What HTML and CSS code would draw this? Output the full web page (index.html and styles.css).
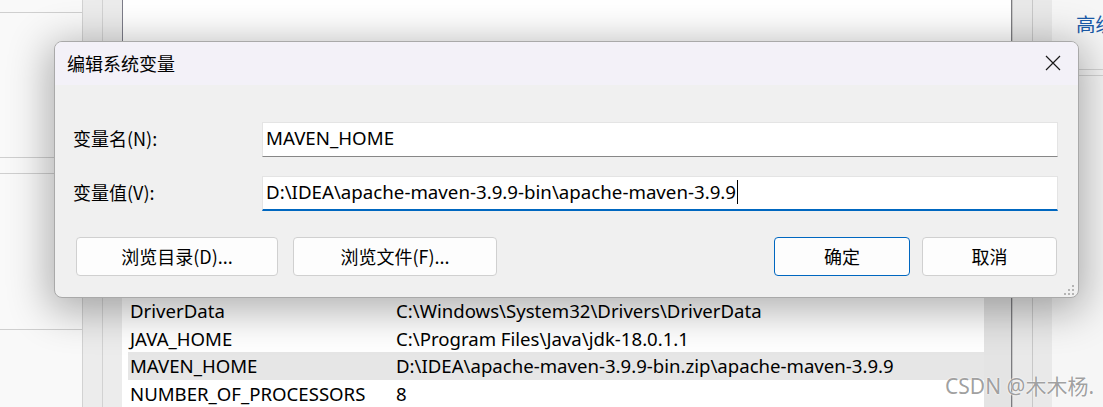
FILE: index.html
```html
<!DOCTYPE html>
<html lang="zh-CN">
<head>
<meta charset="utf-8">
<title>编辑系统变量</title>
<link rel="stylesheet" href="styles.css">
</head>
<body>
<div class="screen">
  <div class="backdrop">
    <div class="bd-left">
      <div class="bl bl-1"></div>
      <div class="bl bl-2"></div>
      <div class="bl bl-3"></div>
      <div class="bl bl-4"></div>
      <div class="bl bl-5"></div>
    </div>
    <div class="rail"></div>
    <div class="rail"></div>
    <div class="bd-main">
      <div class="user-list"></div>
      <div class="sys-list">
        <div class="rows">
          <div class="row"><span class="c1">DriverData</span><span class="c2">C:\Windows\System32\Drivers\DriverData</span></div>
          <div class="row"><span class="c1">JAVA_HOME</span><span class="c2">C:\Program Files\Java\jdk-18.0.1.1</span></div>
          <div class="row sel"><span class="c1">MAVEN_HOME</span><span class="c2">D:\IDEA\apache-maven-3.9.9-bin.zip\apache-maven-3.9.9</span></div>
          <div class="row"><span class="c1">NUMBER_OF_PROCESSORS</span><span class="c2">8</span></div>
        </div>
        <div class="vscroll"></div>
      </div>
    </div>
    <div class="rail rail-r"></div>
    <div class="rail rail-r"></div>
    <div class="bd-right">
      <div class="adv">高级</div>
      <div class="br-line"></div>
    </div>
  </div>

  <div class="dialog">
    <div class="titlebar">
      <span class="title">编辑系统变量</span>
      <svg class="close" width="16" height="16" viewBox="0 0 16 16"><path d="M1 1 L15 15 M15 1 L1 15" stroke="#1a1a1a" stroke-width="1.2" fill="none"/></svg>
    </div>
    <div class="body">
      <div class="form">
        <label class="lbl">变量名(N):</label>
        <div class="field">MAVEN_HOME</div>
        <label class="lbl">变量值(V):</label>
        <div class="field focus">D:\IDEA\apache-maven-3.9.9-bin\apache-maven-3.9.9<span class="caret"></span></div>
      </div>
      <div class="actions">
        <div class="group">
          <button class="btn w1">浏览目录(D)...</button>
          <button class="btn w2">浏览文件(F)...</button>
        </div>
        <div class="group g2">
          <button class="btn primary w3">确定</button>
          <button class="btn w4">取消</button>
        </div>
      </div>
    </div>
    <svg class="grip" width="12" height="12" viewBox="0 0 12 12">
      <rect x="9" y="1" width="2" height="2" fill="#b4b4b4"/>
      <rect x="5" y="5" width="2" height="2" fill="#b4b4b4"/>
      <rect x="9" y="5" width="2" height="2" fill="#b4b4b4"/>
      <rect x="1" y="9" width="2" height="2" fill="#b4b4b4"/>
      <rect x="5" y="9" width="2" height="2" fill="#b4b4b4"/>
      <rect x="9" y="9" width="2" height="2" fill="#b4b4b4"/>
    </svg>
  </div>

  <div class="watermark">CSDN @木木杨.</div>
</div>
</body>
</html>
```

FILE: styles.css
```css
* { box-sizing: border-box; }
html, body { margin: 0; padding: 0; }
body {
  width: 1103px;
  height: 407px;
  overflow: hidden;
  font-family: "Noto Sans", "Noto Sans CJK SC", sans-serif;
  color: #000;
  background: #f3f3f3;
}
.screen {
  position: relative;
  width: 1103px;
  height: 407px;
  overflow: hidden;
}

/* ---------- background window ---------- */
.backdrop {
  display: flex;
  height: 407px;
}
.bd-left {
  width: 82px;
  display: flex;
  flex-direction: column;
  background: #f9f9f9;
}
.bl { border-bottom: 1px solid #cfcfcf; }
.bl-1 { height: 13px; }
.bl-2 { height: 145px; }
.bl-3 { height: 16px; }
.bl-4 { height: 156px; }
.bl-5 { flex: 1; border-bottom: none; }

.rail {
  width: 20px;
  background: #ececec;
  border-left: 1px solid #d2d2d2;
}
.rail-r { background: #e9e9e9; border-left: 1px solid #c8c8c8; }

.bd-main {
  width: 890px;
  display: flex;
  flex-direction: column;
  border-right: 1px solid #7c7c80;
}
.user-list {
  height: 220px;
  background: #ffffff;
  border-left: 1px solid #7c7c88;
}
.sys-list {
  margin-top: 10px;
  flex: 1;
  display: flex;
  padding-left: 6px;
  padding-top: 71.5px;
  background: #ffffff;
}
.rows { flex: 1; }
.row {
  height: 27.5px;
  display: flex;
  align-items: center;
  padding-left: 2px;
  font-size: 18.6px;
  white-space: nowrap;
  overflow: hidden;
}
.row.sel { background: #e6e6e6; }
.c1 { width: 266px; flex: none; }
.vscroll {
  width: 27px;
  background: #e4e4e4;
}

.bd-right {
  width: 51px;
  background: #f6f6f6;
  display: flex;
  flex-direction: column;
  overflow: hidden;
}
.adv {
  padding: 12px 0 0 24px;
  height: 70px;
  font-size: 19.5px;
  line-height: 26px;
  color: #1a5aa8;
  white-space: nowrap;
  border-bottom: 1px solid #d4d4d4;
}
.br-line { height: 6px; border-bottom: 1px solid #d4d4d4; }

/* ---------- dialog ---------- */
.dialog {
  position: absolute;
  left: 54px;
  top: 41px;
  width: 1025px;
  height: 257px;
  border: 1px solid #a9a9a9;
  border-radius: 8px;
  overflow: hidden;
  background: #f0f0f0;
  box-shadow: 0 8px 40px 6px rgba(0, 0, 0, 0.30);
  display: flex;
  flex-direction: column;
}
.titlebar {
  height: 43px;
  background: #f3f1f8;
  display: flex;
  align-items: center;
  justify-content: space-between;
  padding: 0 17px 0 12px;
}
.title {
  font-family: "Noto Sans CJK SC", sans-serif;
  font-size: 18px;
  line-height: 24px;
  margin-top: -2px;
}
.close { display: block; margin-top: -2px; }

.body {
  flex: 1;
  padding: 37px 20px 0 18px;
}
.form {
  display: grid;
  grid-template-columns: 189px 796px;
  row-gap: 19px;
  align-items: center;
}
.lbl {
  font-family: "Noto Sans CJK SC", sans-serif;
  font-size: 18px;
  line-height: 24px;
  margin-top: -3px;
}
.field {
  height: 35px;
  background: #fff;
  border: 1px solid #e4e4e4;
  border-bottom: 1px solid #878787;
  font-size: 18.7px;
  line-height: 28px;
  padding: 0 0 4px 3px;
  white-space: nowrap;
  overflow: hidden;
  display: flex;
  align-items: center;
}
.field.focus { border-bottom: 2px solid #0067c0; padding-bottom: 3px; }
.caret {
  display: inline-block;
  width: 1px;
  height: 24px;
  background: #000;
  margin-left: 1px;
}

.actions {
  margin-top: 26px;
  display: flex;
  justify-content: space-between;
  padding: 0 1px 0 3px;
}
.group { display: flex; gap: 15px; }
.group.g2 { gap: 12px; }
.btn {
  height: 39px;
  background: #fdfdfd;
  border: 1px solid #d0d0d0;
  border-radius: 4px;
  font-family: "Noto Sans CJK SC", sans-serif;
  font-size: 18px;
  color: #000;
  padding: 0 0 2px 0;
}
.btn.primary { border: 1px solid #0067c0; }
.w1 { width: 202px; }
.w2 { width: 204px; }
.w3 { width: 136px; }
.w4 { width: 135px; }

.grip {
  position: absolute;
  right: 3px;
  bottom: 1px;
}

.watermark {
  position: absolute;
  left: 945px;
  top: 372px;
  font-family: "Noto Sans", "Noto Sans CJK SC", sans-serif;
  font-size: 21px;
  line-height: 28px;
  color: rgba(135, 135, 135, 0.8);
  text-shadow: 0 0 2px #fff, 0 0 1px #fff;
  white-space: nowrap;
}
```
